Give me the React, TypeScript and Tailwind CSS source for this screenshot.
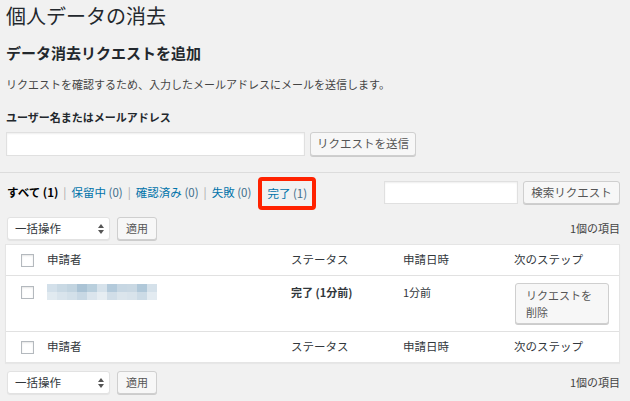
import React from 'react';

const font = { fontFamily: '"Noto Sans CJK JP", "Noto Sans", "Liberation Sans", sans-serif' };

const Checkbox = () => (
  <span className="block w-[13px] h-[13px] bg-white border border-[#b4b9be] shadow-[inset_0_1px_2px_rgba(0,0,0,0.1)]" />
);

const SortArrows = () => (
  <svg width="6" height="10" viewBox="0 0 6 10" className="ml-auto">
    <path d="M3 0 L6 4 H0 Z" fill="#555" />
    <path d="M3 10 L6 6 H0 Z" fill="#555" />
  </svg>
);

function BulkBar() {
  return (
    <div className="flex items-center h-[23px]">
      <div className="ml-[1px] flex items-center w-[103px] h-[23px] bg-white rounded-[3px] border border-[#e2e2e2] shadow-[0_1px_1px_rgba(0,0,0,0.06)] pl-[7px] pr-[5px] text-[11.5px] text-[#32373c]">
        一括操作
        <SortArrows />
      </div>
      <button className="ml-[7px] w-[40px] h-[23px] bg-[#f7f7f7] border border-[#cfcfcf] rounded-[3px] shadow-[0_1px_0_#ccc] text-[11px] text-[#555]">
        適用
      </button>
      <span className="ml-auto text-[11px] text-[#444]">1個の項目</span>
    </div>
  );
}

function HeadRow({ top }: { top?: boolean }) {
  return (
    <div className={`grid grid-cols-[41px_244px_112px_111px_1fr] items-center h-[31px] text-[11.5px] text-[#32373c] ${top ? 'border-b border-[#e1e1e1]' : 'border-t border-[#e1e1e1]'}`}>
      <div className="pl-[15px]"><Checkbox /></div>
      <div>申請者</div>
      <div>ステータス</div>
      <div>申請日時</div>
      <div>次のステップ</div>
    </div>
  );
}

const blurTop = ['#d3e0ea', '#c9d9e4', '#c2d4e0', '#aac3d5', '#b9cfdd', '#d6e2eb', '#b3cadb', '#c7d7e3', '#c9d8e3', '#b0c8d9', '#d5e1ea'];
const blurBot = ['#e1eaf0', '#d9e4ec', '#d3e0e9', '#c8d8e4', '#dbe5ed', '#e6edf2', '#d1dee8', '#dbe5ec', '#d8e3eb', '#ccdbe6', '#e3ebf1'];

const Sep = () => <span className="mx-[5px] text-[#aaa]">|</span>;

export default function App() {
  return (
    <div className="w-[630px] h-[401px] overflow-hidden bg-[#f1f1f1] text-[#23282d]" style={font}>
      <div className="pl-[6px] pr-[10px]">
        <h1 className="pt-[2px] text-[20px] leading-[28px] text-[#23282d]">個人データの消去</h1>
        <h2 className="mt-[12px] text-[15px] leading-[22px] font-bold">データ消去リクエストを追加</h2>
        <p className="mt-[12px] text-[11px] leading-[16px] text-[#444]">リクエストを確認するため、入力したメールアドレスにメールを送信します。</p>
        <div className="mt-[17px] text-[11px] leading-[16px] font-bold">ユーザー名またはメールアドレス</div>
        <div className="mt-[7px] flex items-center gap-[5px]">
          <div className="w-[299px] h-[24px] bg-white border border-[#e0e0e0] shadow-[inset_0_1px_2px_rgba(0,0,0,0.07)]" />
          <button className="h-[24px] w-[106px] bg-[#f7f7f7] border border-[#cfcfcf] rounded-[3px] shadow-[0_1px_0_#ccc] text-[11.5px] text-[#555]">
            リクエストを送信
          </button>
        </div>
        <div className="mt-[16px] h-px bg-[#dcdcdc] -ml-[6px]" />

        <div className="mt-[8px] flex items-center h-[23px]">
          <div className="flex items-center text-[11.5px] ml-[1px]">
            <span className="font-bold text-[#000]">すべて (1)</span>
            <Sep />
            <span className="text-[#0073aa]">保留中 <span className="text-[#3f6f8c]">(0)</span></span>
            <Sep />
            <span className="text-[#0073aa]">確認済み <span className="text-[#3f6f8c]">(0)</span></span>
            <Sep />
            <span className="text-[#0073aa]">失敗 <span className="text-[#3f6f8c]">(0)</span></span>
            <span className="ml-[7px] mt-[2px] px-[5px] py-[4px] border-[4px] border-[#ff2200] rounded-[4px] text-[#0073aa]">
              完了 <span className="text-[#3f6f8c]">(1)</span>
            </span>
          </div>
          <div className="ml-auto flex items-center gap-[5px]">
            <div className="w-[134px] h-[23px] bg-white border border-[#e0e0e0] shadow-[inset_0_1px_2px_rgba(0,0,0,0.07)]" />
            <button className="w-[97px] h-[23px] bg-[#f7f7f7] border border-[#cfcfcf] rounded-[3px] shadow-[0_1px_0_#ccc] text-[11.5px] text-[#555]">
              検索リクエスト
            </button>
          </div>
        </div>

        <div className="mt-[13px]">
          <BulkBar />
        </div>

        <div className="mt-[4px] -ml-[1px] bg-white border border-[#e5e5e5] shadow-[0_1px_1px_rgba(0,0,0,0.04)]">
          <HeadRow top />
          <div className="grid grid-cols-[41px_244px_112px_111px_1fr] h-[55px] text-[11px]">
            <div className="pl-[15px] pt-[10px]"><Checkbox /></div>
            <div className="pt-[8px]">
              <div className="flex">
                {blurTop.map((c, i) => (
                  <span key={i} className="block w-[10px] h-[8px]" style={{ background: c }} />
                ))}
              </div>
              <div className="flex">
                {blurBot.map((c, i) => (
                  <span key={i} className="block w-[10px] h-[8px]" style={{ background: c }} />
                ))}
              </div>
            </div>
            <div className="pt-[8px] font-bold text-[#32373c]">完了 (1分前)</div>
            <div className="pt-[8px] text-[#32373c]">1分前</div>
            <div className="pt-[7px]">
              <button className="ml-[1px] w-[94px] h-[41px] bg-[#f7f7f7] border border-[#cfcfcf] rounded-[3px] shadow-[0_1px_0_#ccc] text-left pl-[10px] text-[11px] leading-[17px] text-[#555]">
                リクエストを<br />削除
              </button>
            </div>
          </div>
          <HeadRow />
        </div>

        <div className="mt-[8px]">
          <BulkBar />
        </div>
      </div>
    </div>
  );
}
